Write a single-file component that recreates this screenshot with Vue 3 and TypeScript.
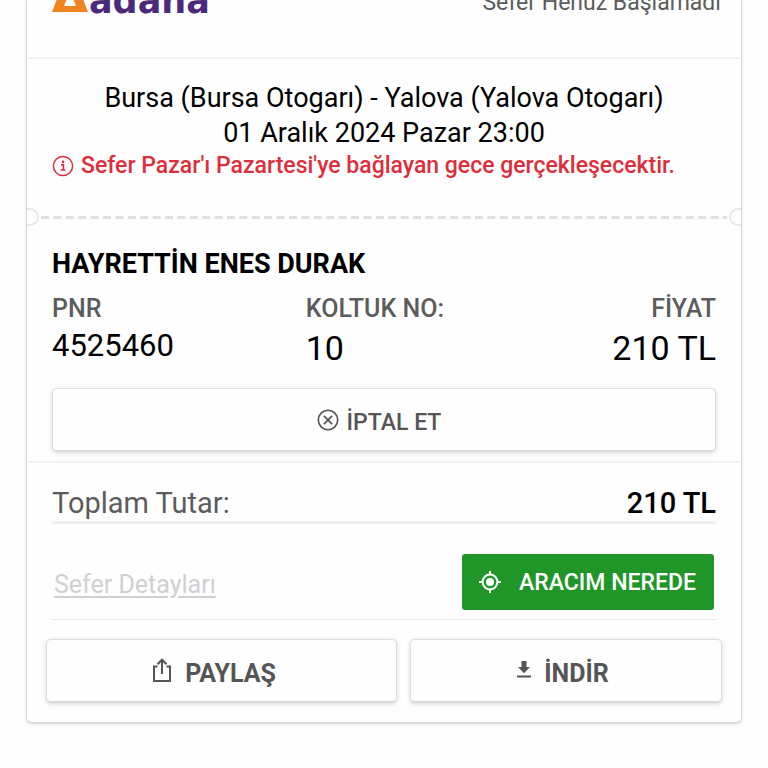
<script setup lang="ts">
interface Fact {
  label: string
  value: string
}

const route = 'Bursa (Bursa Otogarı) - Yalova (Yalova Otogarı)'
const departure = '01 Aralık 2024 Pazar 23:00'
const passenger = 'HAYRETTİN ENES DURAK'
const facts: Fact[] = [
  { label: 'PNR', value: '4525460' },
  { label: 'KOLTUK NO:', value: '10' },
  { label: 'FİYAT', value: '210 TL' },
]
const total = '210 TL'
</script>

<template>
  <main class="page">
    <article class="ticket">
      <header class="head">
        <div class="brand">
          <svg class="brand-mark" viewBox="0 0 36 34" aria-hidden="true">
            <path fill="#f08322" fill-rule="evenodd" d="M13 0h10l13 34H0zM18 13l-6 15h12z" />
          </svg>
          <span class="brand-name">adana</span>
        </div>
        <p class="status">Sefer Henüz Başlamadı</p>
      </header>

      <section class="trip">
        <h1 class="route">{{ route }}</h1>
        <p class="route">{{ departure }}</p>
        <p class="notice">
          <svg class="notice-icon" viewBox="0 0 22 22" aria-hidden="true">
            <circle cx="11" cy="11" r="9.6" fill="none" stroke="currentColor" stroke-width="1.5" />
            <circle cx="11" cy="6.9" r="1.3" fill="currentColor" />
            <path d="M9 9.9h2.4v5M8.7 15h4.8" fill="none" stroke="currentColor" stroke-width="1.6" />
          </svg>
          <span>Sefer Pazar'ı Pazartesi'ye bağlayan gece gerçekleşecektir.</span>
        </p>
      </section>

      <div class="tear" aria-hidden="true">
        <span class="notch notch-left"></span>
        <svg class="dashes" height="3">
          <line x1="0" y1="1.5" x2="100%" y2="1.5" stroke="#e0e0e0" stroke-width="3" stroke-dasharray="8 4.4" />
        </svg>
        <span class="notch notch-right"></span>
      </div>

      <section class="passenger">
        <h2 class="name">{{ passenger }}</h2>
        <dl class="facts">
          <div v-for="fact in facts" :key="fact.label" class="fact">
            <dt>{{ fact.label }}</dt>
            <dd>{{ fact.value }}</dd>
          </div>
        </dl>
        <button type="button" class="button cancel">
          <svg class="cancel-icon" viewBox="0 0 22 22" fill="none" stroke="currentColor" aria-hidden="true">
            <circle cx="11" cy="11" r="9.7" stroke-width="1.6" />
            <path d="M6.9 6.9l8.2 8.2M15.1 6.9l-8.2 8.2" stroke-width="1.7" />
          </svg>
          <span>İPTAL ET</span>
        </button>
      </section>

      <section class="summary">
        <div class="total">
          <span>Toplam Tutar:</span>
          <strong>{{ total }}</strong>
        </div>
        <div class="tracking">
          <a class="details" href="#detaylar">Sefer Detayları</a>
          <button type="button" class="locate">
            <svg class="locate-icon" viewBox="0 0 22 22" aria-hidden="true">
              <circle cx="11" cy="11" r="7.4" fill="none" stroke="currentColor" stroke-width="2" />
              <circle cx="11" cy="11" r="4" fill="currentColor" />
              <path d="M11 0v4M11 18v4M0 11h4M18 11h4" stroke="currentColor" stroke-width="2" />
            </svg>
            <span>ARACIM NEREDE</span>
          </button>
        </div>
      </section>

      <footer class="actions">
        <button type="button" class="button share">
          <svg class="share-icon" viewBox="0 0 20 24" fill="none" stroke="currentColor" stroke-width="2" aria-hidden="true">
            <path d="M5.500 8.500H2V23h16V8.500h-3.500M10 16V2M5.500 6.200L10 1.700l4.500 4.500" />
          </svg>
          <span>PAYLAŞ</span>
        </button>
        <button type="button" class="button download">
          <svg class="download-icon" viewBox="0 0 14 17" fill="currentColor" aria-hidden="true">
            <path d="M4.500 0h5v6H13L7 12.200 1 6h3.500zM0 14.400h14v2H0z" />
          </svg>
          <span>İNDİR</span>
        </button>
      </footer>
    </article>
  </main>
</template>

<style>
body {
  margin: 0;
  background: #fefefe;
}
</style>

<style scoped>
.page {
  box-sizing: border-box;
  padding: 0 26px 44px;
  overflow: hidden;
  color: #000;
  font-family: Roboto, "Liberation Sans", sans-serif;
}

h1, h2, p, dl, dd {
  margin: 0;
  font-weight: 400;
}

button {
  font: inherit;
  cursor: pointer;
}

svg {
  flex: none;
  display: block;
}

.ticket {
  border: 1px solid #d9d9d9;
  border-top: 0;
  border-bottom: 2px solid #dcdcdc;
  border-radius: 0 0 6px 6px;
  background: #fefefe;
  box-shadow: 0 1px 4px rgba(0, 0, 0, 0.08);
}

.head {
  display: flex;
  justify-content: space-between;
  align-items: flex-end;
  height: 57px;
  padding: 0 20px 0 25px;
  border-bottom: 2px solid #f2f2f2;
}

.brand {
  display: flex;
  align-items: flex-end;
  margin-bottom: 45px;
}

.brand-mark {
  width: 36px;
  height: 34px;
}

.brand-name {
  margin-left: 1px;
  color: #4b2a7b;
  font: 700 35px/22px "DejaVu Sans", sans-serif;
}

.status {
  margin-bottom: 40px;
  color: #5c5c5c;
  font-size: 23px;
  line-height: 28px;
}

.trip {
  padding: 22px 25px 26px;
}

.route {
  font-size: 27px;
  line-height: 35px;
  text-align: center;
}

.notice {
  display: flex;
  align-items: center;
  gap: 7px;
  color: #dc2f3c;
  font-size: 23px;
  font-weight: 500;
  line-height: 30px;
}

.notice-icon,
.cancel-icon,
.locate-icon {
  width: 22px;
  height: 22px;
}

.tear {
  display: flex;
  align-items: center;
  justify-content: space-between;
  gap: 2px;
  height: 20px;
}

.notch {
  box-sizing: border-box;
  flex: none;
  width: 12px;
  height: 18px;
  border: 2px solid #e8e8e8;
}

.notch-left {
  border-left: 0;
  border-radius: 0 10px 10px 0;
}

.notch-right {
  border-right: 0;
  border-radius: 10px 0 0 10px;
}

.dashes {
  flex: 1;
  min-width: 0;
}

.passenger {
  padding: 20px 25px 9px;
  border-bottom: 2px solid #f2f2f2;
}

.name {
  font-size: 27px;
  font-weight: 700;
  line-height: 34px;
}

.facts {
  display: grid;
  grid-template-columns: 253fr 237fr 172fr;
  margin-top: 12px;
}

.fact:last-child {
  text-align: right;
}

.fact dt {
  color: #5c5c5c;
  font-size: 25px;
  font-weight: 500;
  line-height: 32px;
}

.fact dd {
  font-size: 34px;
  line-height: 46px;
}

.fact:first-child dd {
  font-size: 31px;
  line-height: 42px;
}

.button {
  display: flex;
  align-items: center;
  justify-content: center;
  box-sizing: border-box;
  height: 64px;
  padding: 5px 0 0;
  border: 1px solid #dedede;
  border-bottom: 2px solid #d9d9d9;
  border-radius: 5px;
  background: #fefefe;
  box-shadow: 0 1px 4px rgba(0, 0, 0, 0.16);
  color: #555;
  font-size: 25px;
  font-weight: 700;
}

.cancel {
  gap: 8px;
  width: 100%;
  margin-top: 17px;
  padding-right: 10px;
  font-size: 23px;
  font-weight: 500;
}

.cancel-icon {
  margin-bottom: 4px;
}

.summary {
  padding: 20px 25px 0;
}

.total {
  display: flex;
  align-items: center;
  justify-content: space-between;
  box-sizing: border-box;
  height: 41px;
  padding-top: 2px;
  border-bottom: 3px solid #efefef;
  color: #5c5c5c;
  font-size: 29px;
}

.total strong {
  color: #000;
  font-weight: 500;
}

.tracking {
  display: flex;
  align-items: center;
  justify-content: space-between;
  margin-top: 30px;
  padding: 0 2px 9px;
  border-bottom: 1px solid #e8e8e8;
}

.details {
  padding-top: 4px;
  color: #d0d0d4;
  font-size: 25px;
  text-underline-offset: 3px;
}

.locate {
  display: flex;
  align-items: center;
  gap: 18px;
  height: 56px;
  padding: 2px 18px 2px 17px;
  border: 0;
  border-radius: 3px;
  background: #219628;
  color: #fff;
  font-size: 23px;
  font-weight: 500;
}

.actions {
  display: grid;
  grid-template-columns: 351fr 312fr;
  gap: 13px;
  padding: 19px 19px;
}

.share {
  gap: 12px;
  padding-right: 16px;
}

.share-icon {
  width: 22px;
  height: 24px;
  margin-bottom: 6px;
}

.download {
  gap: 13px;
  padding-right: 6px;
}

.download-icon {
  width: 14px;
  height: 17px;
  margin-bottom: 8px;
}
</style>
